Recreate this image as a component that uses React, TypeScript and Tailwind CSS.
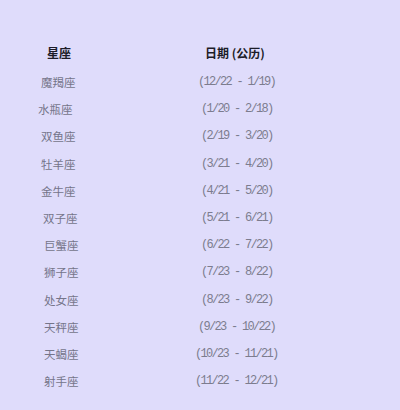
const rows: { name: string; nx: string; date: string; dx: string }[] = [
  { name: '魔羯座', nx: 'w-[198px] pl-[41px]', date: '(12/22 - 1/19)', dx: 'pl-0' },
  { name: '水瓶座', nx: 'w-[198px] pl-[38px]', date: '(1/20 - 2/18)', dx: 'pl-[3px]' },
  { name: '双鱼座', nx: 'w-[198px] pl-[41px]', date: '(2/19 - 3/20)', dx: 'pl-[3px]' },
  { name: '牡羊座', nx: 'w-[198px] pl-[41px]', date: '(3/21 - 4/20)', dx: 'pl-[3px]' },
  { name: '金牛座', nx: 'w-[198px] pl-[41px]', date: '(4/21 - 5/20)', dx: 'pl-[3px]' },
  { name: '双子座', nx: 'w-[198px] pl-[43px]', date: '(5/21 - 6/21)', dx: 'pl-[3px]' },
  { name: '巨蟹座', nx: 'w-[198px] pl-[44px]', date: '(6/22 - 7/22)', dx: 'pl-[3px]' },
  { name: '狮子座', nx: 'w-[198px] pl-[44px]', date: '(7/23 - 8/22)', dx: 'pl-[3px]' },
  { name: '处女座', nx: 'w-[198px] pl-[44px]', date: '(8/23 - 9/22)', dx: 'pl-[3px]' },
  { name: '天秤座', nx: 'w-[198px] pl-[44px]', date: '(9/23 - 10/22)', dx: 'pl-0' },
  { name: '天蝎座', nx: 'w-[195px] pl-[44px]', date: '(10/23 - 11/21)', dx: 'pl-0' },
  { name: '射手座', nx: 'w-[195px] pl-[44px]', date: '(11/22 - 12/21)', dx: 'pl-0' },
];

export default function App() {
  return (
    <div className="w-[400px] h-[410px] bg-[#dfdcfb] pt-[44px] overflow-hidden [font-family:'Noto_Sans_CJK_SC',sans-serif]">
      <div className="flex h-[18px] items-center text-[12px] font-bold text-[#1c1c28]">
        <div className="pl-[47px] w-[205px]">星座</div>
        <div className="whitespace-pre">日期 (公历)</div>
      </div>
      <div className="mt-[12px] flex flex-col">
        {rows.map((r) => (
          <div key={r.name} className="flex h-[27.2px] items-start">
            <div className={`${r.nx} text-[11.5px] leading-[16px] text-[#75758a]`}>{r.name}</div>
            <div
              className={`${r.dx} text-[12px] leading-[16px] tracking-[-1.7px] whitespace-pre text-[#7c7c8e] [font-family:'Liberation_Mono',monospace]`}
            >
              {r.date}
            </div>
          </div>
        ))}
      </div>
    </div>
  );
}
